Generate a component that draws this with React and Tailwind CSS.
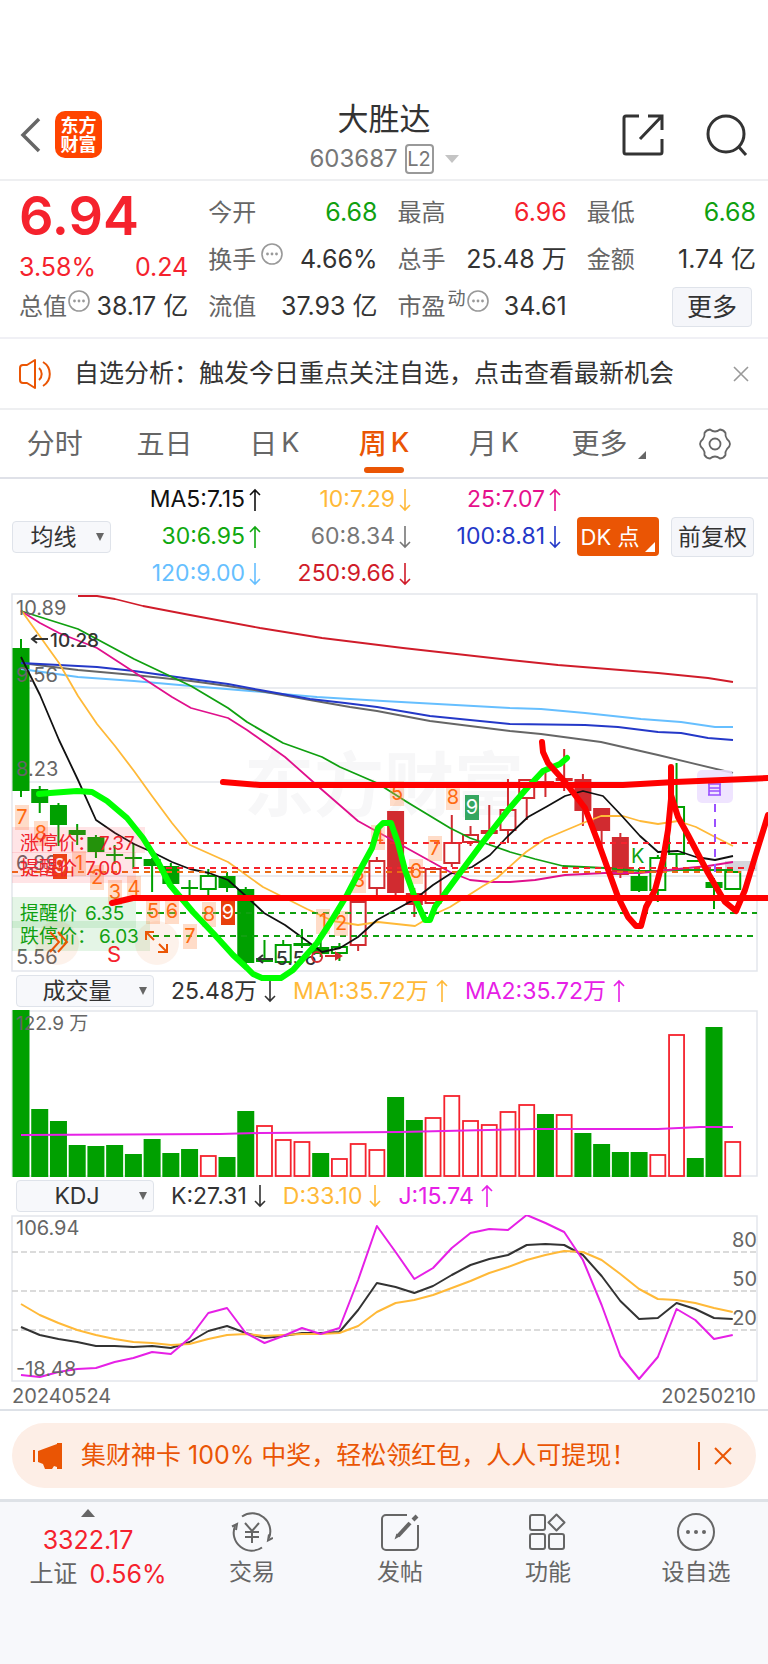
import clsx from 'clsx';

const STEP = 18.73;
const barX = (i) => 21 + i * STEP;

const TABS = [['分时'], ['五日'], ['日', 'K'], ['周', 'K'], ['月', 'K']];

const AVERAGES = [
  { label: 'MA5:7.15', up: true, color: 'text-[#111111]' },
  { label: '10:7.29', up: false, color: 'text-[#ffb938]' },
  { label: '25:7.07', up: true, color: 'text-[#e6108c]' },
  { label: '30:6.95', up: true, color: 'text-[#10a810]' },
  { label: '60:8.34', up: false, color: 'text-[#777777]' },
  { label: '100:8.81', up: false, color: 'text-[#2438c8]' },
  { label: '120:9.00', up: false, color: 'text-[#66bfff]' },
  { label: '250:9.66', up: false, color: 'text-[#d01c2a]' },
];

// [body top, body bottom, high, low, kind]
// G / R = filled green / red, g / r = hollow
const CANDLES = [
  [54, 197, 45, 203, 'G'],
  [195, 209, 192, 219, 'G'],
  [211, 231, 209, 252, 'G'],
  [236, 241, 230, 251, 'G'],
  [243, 258, 241, 264, 'G'],
  [260, 262, 251, 270, 'G'],
  [263, 265, 249, 275, 'G'],
  [265, 272, 264, 298, 'G'],
  [272, 290, 269, 291, 'G'],
  [293, 295, 286, 303, 'G'],
  [282, 295, 275, 301, 'g'],
  [282, 294, 278, 298, 'G'],
  [295, 369, 293, 373, 'G'],
  [364, 368, 346, 368, 'G'],
  [351, 368, 346, 368, 'g'],
  [349, 352, 335, 354, 'G'],
  [353, 360, 346, 363, 'G'],
  [353, 359, 349, 367, 'g'],
  [308, 351, 308, 357, 'r'],
  [267, 294, 263, 303, 'r'],
  [217, 299, 217, 303, 'R'],
  [299, 311, 294, 323, 'R'],
  [275, 309, 275, 309, 'r'],
  [249, 269, 221, 273, 'r'],
  [241, 248, 232, 252, 'r'],
  [237, 239, 211, 239, 'r'],
  [216, 236, 185, 249, 'r'],
  [186, 204, 186, 226, 'r'],
  [187, 191, 177, 203, 'R'],
  [184, 187, 155, 197, 'R'],
  [185, 217, 180, 232, 'R'],
  [214, 237, 214, 258, 'R'],
  [243, 281, 239, 284, 'R'],
  [282, 297, 274, 298, 'G'],
  [264, 296, 261, 308, 'g'],
  [213, 260, 169, 273, 'g'],
  [266, 268, 266, 268, 'G'],
  [288, 294, 284, 315, 'G'],
  [278, 295, 277, 295, 'g'],
];

const MA_LINES = [
  {
    color: '#d01c2a',
    points: '78,2 97,2 115,5 143,12 190,21 260,34 322,44 403,54 510,66 558,71 658,79 708,84 733,88',
  },
  {
    color: '#66bfff',
    points: '21,75 78,83 134,87 191,92 250,97 317,103 383,107 510,114 541,115 585,119 641,125 681,128 715,133 733,133',
  },
  {
    color: '#666666',
    points: '21,69 78,76 134,81 191,87 228,92 260,97 310,106 350,113 377,117 430,127 510,137 541,140 601,148 658,161 733,179',
  },
  {
    color: '#2438c8',
    points: '21,69 97,73 134,77 191,85 228,90 260,96 310,105 345,109 377,113 430,122 510,130 585,131 618,133 658,138 681,139 708,144 733,146',
  },
  {
    color: '#10a010',
    points: '21,17 78,35 134,65 191,92 228,114 247,128 283,149 322,163 340,173 377,189 407,208 450,234 470,244 510,258 535,265 563,272 605,274 640,277 658,277 678,276 733,276',
  },
  {
    color: '#e0108c',
    points: '21,17 40,29 59,39 97,54 134,78 152,90 172,103 191,114 228,124 247,136 285,163 320,194 358,227 403,252 450,278 470,286 490,288 510,288 535,286 565,281 605,279 640,279 678,275 708,272 733,268',
  },
  {
    color: '#ffb938',
    points: '21,16 59,69 78,102 97,130 115,152 134,177 152,202 172,229 190,251 228,268 263,293 307,315 333,327 358,331 378,328 415,332 437,319 450,313 483,292 497,284 526,258 545,245 583,229 601,222 623,222 640,227 658,230 678,227 696,233 715,243 733,252',
  },
  {
    color: '#111111',
    points: '21,63 40,101 59,146 78,186 96,226 115,239 134,250 152,258 172,268 190,275 209,279 228,286 247,303 264,319 285,331 322,358 340,354 358,343 377,326 415,305 433,291 450,280 472,273 490,261 508,242 528,223 546,213 565,202 583,197 603,202 621,221 640,242 658,258 678,257 696,263 715,266 733,262',
  },
];

const COUNTS = [
  { n: 7, x: 22, y: 223 },
  { n: 8, x: 41, y: 239 },
  { n: 9, x: 60, y: 272, fill: '#e8400c' },
  { n: 1, x: 79, y: 269 },
  { n: 2, x: 97, y: 283 },
  { n: 3, x: 115, y: 298 },
  { n: 4, x: 134, y: 294 },
  { n: 5, x: 153, y: 317 },
  { n: 6, x: 172, y: 317 },
  { n: 7, x: 190, y: 342 },
  { n: 8, x: 209, y: 320 },
  { n: 9, x: 228, y: 318, fill: '#e8400c' },
  { n: 1, x: 323, y: 327 },
  { n: 2, x: 341, y: 329 },
  { n: 3, x: 359, y: 286 },
  { n: 4, x: 378, y: 243 },
  { n: 5, x: 397, y: 199 },
  { n: 6, x: 416, y: 277 },
  { n: 7, x: 435, y: 254 },
  { n: 8, x: 453, y: 203 },
  { n: 9, x: 472, y: 213, fill: '#35a660' },
];

const PRICE_AXIS = [
  ['10.89', 21],
  ['9.56', 88],
  ['8.23', 182],
  ['6.89', 276],
  ['5.56', 370],
];

const VOLUMES = [
  167, 68, 56, 32, 31, 32, 23, 38, 24, 28, 22, 20, 66, 52, 38, 36, 24, 19, 34, 28,
  80, 57, 60, 82, 57, 53, 66, 73, 63, 63, 44, 33, 25, 25, 23, 143, 19, 150, 36,
];
const VOLUME_UP = [10, 13, 14, 15, 17, 18, 19, 22, 23, 24, 25, 26, 27, 29, 34, 35, 38];

const KDJ = {
  k: [
    112, 120, 124, 127, 131, 131, 132, 131, 133, 127, 116, 111, 118, 123, 121, 118, 118, 117, 95, 68,
    72, 78, 71, 60, 50, 44, 40, 30, 29, 30, 40, 61, 86, 104, 103, 88, 94, 103, 104,
  ],
  d: [
    89, 100, 108, 115, 120, 124, 127, 128, 130, 129, 124, 120, 119, 121, 120, 119, 119, 118, 111, 97,
    88, 85, 80, 73, 66, 58, 52, 45, 40, 36, 37, 45, 59, 74, 84, 85, 88, 93, 97,
  ],
  j: [
    160, 162, 157, 154, 153, 147, 143, 137, 139, 123, 98, 93, 118, 128, 121, 113, 119, 113, 65, 11,
    37, 64, 53, 33, 18, 14, 15, 0, 8, 17, 45, 90, 141, 164, 142, 94, 105, 124, 120,
  ],
};

const toPoints = (values) => values.map((v, i) => `${barX(i)},${v}`).join(' ');

function Arrow({ up }) {
  return (
    <svg viewBox="0 0 12 24" className="w-3 h-6 shrink-0" fill="none" stroke="currentColor" strokeWidth="1.6">
      {up ? <path d="M6 23V2M1 7l5-5 5 5" /> : <path d="M6 1v21M1 17l5 5 5-5" />}
    </svg>
  );
}

function MoreDots() {
  return (
    <svg viewBox="0 0 24 24" className="w-6 h-6 shrink-0 text-[#999999]" fill="none" stroke="currentColor" strokeWidth="1.6">
      <circle cx="12" cy="12" r="10" />
      <g fill="currentColor" stroke="none">
        <circle cx="7.5" cy="12" r="1.4" />
        <circle cx="12" cy="12" r="1.4" />
        <circle cx="16.5" cy="12" r="1.4" />
      </g>
    </svg>
  );
}

function Picker({ label, value, className }) {
  return (
    <div className={clsx('relative shrink-0', className)}>
      <select
        aria-label={label}
        defaultValue={value}
        className="block w-full h-8 appearance-none rounded border border-[#dfe3ea] bg-[#f7f8fb] pl-1 pr-5 text-[23px] leading-7 text-[#333333] text-center [text-align-last:center]"
      >
        <option>{value}</option>
      </select>
      <svg viewBox="0 0 10 10" className="absolute right-[6px] top-[11px] w-[10px] h-[10px] pointer-events-none" fill="#666666">
        <path d="M1 1h8L5 9z" />
      </svg>
    </div>
  );
}

function Header() {
  return (
    <header className="grid grid-cols-[1fr_auto_1fr] items-center px-5 pt-[90px] h-[181px] border-b-2 border-[#eeeff1]">
      <div className="flex items-center gap-[14px]">
        <button aria-label="返回">
          <svg viewBox="0 0 21 36" className="w-[21px] h-9" fill="none" stroke="#666666" strokeWidth="3.5">
            <path d="M19 2L3 18l16 16" />
          </svg>
        </button>
        <a
          href="#home"
          className="flex flex-col items-center justify-center w-[47px] h-[47px] rounded-[10px] bg-[#ff4400] text-white text-[18px] leading-[19px] font-bold"
        >
          <span>东方</span>
          <span>财富</span>
        </a>
      </div>
      <div className="flex flex-col items-center pt-1">
        <h1 className="text-[31px] leading-[42px] text-[#333333]">大胜达</h1>
        <button className="flex items-center gap-[7px] mt-[3px] h-8 text-[#777777]">
          <span className="text-[24px]">603687</span>
          <span className="flex items-center justify-center w-[29px] h-[30px] rounded border-2 border-[#999999] text-[20px]">
            L2
          </span>
          <svg viewBox="0 0 14 8" className="w-[14px] h-2 ml-1" fill="#c4c4c4">
            <path d="M0 0h14L7 8z" />
          </svg>
        </button>
      </div>
      <div className="flex items-center justify-end gap-[42px]">
        <button aria-label="分享">
          <svg viewBox="0 0 42 42" className="w-[42px] h-[42px]" fill="none" stroke="#333333" strokeWidth="3">
            <path d="M17 2H4a2 2 0 00-2 2v34a2 2 0 002 2h34a2 2 0 002-2V25" />
            <path d="M26 2h14v14M40 2L18 25" />
          </svg>
        </button>
        <button aria-label="搜索">
          <svg viewBox="0 0 42 42" className="w-[42px] h-[42px]" fill="none" stroke="#333333" strokeWidth="3">
            <circle cx="20" cy="20" r="18" />
            <path d="M32 32l8 9" />
          </svg>
        </button>
      </div>
    </header>
  );
}

function Stat({ label, value, tone = 'text-[#333333]', children }) {
  return (
    <div className="flex items-center h-[47px] whitespace-nowrap">
      <span className="text-[24px] text-[#666666]">{label}</span>
      {children}
      <span className={clsx('ml-auto', tone)}>{value}</span>
    </div>
  );
}

function Quote() {
  return (
    <section className="grid grid-cols-4 gap-x-5 pl-[19px] pr-3 pt-2 h-[158px] border-b-2 border-[#f0f0f5] text-[25px]">
      <div className="flex flex-col text-[#f5222d]">
        <strong className="flex items-center h-[54px] text-[54px] leading-none font-semibold">6.94</strong>
        <div className="flex items-end justify-between h-10 leading-8">
          <span>3.58%</span>
          <span>0.24</span>
        </div>
        <Stat label="总值" value="38.17 亿">
          <span className="-mt-3"><MoreDots /></span>
        </Stat>
      </div>
      <div>
        <Stat label="今开" value="6.68" tone="text-[#10a010]" />
        <Stat label="换手" value="4.66%">
          <span className="ml-1 -mt-3"><MoreDots /></span>
        </Stat>
        <Stat label="流值" value="37.93 亿" />
      </div>
      <div>
        <Stat label="最高" value="6.96" tone="text-[#f5222d]" />
        <Stat label="总手" value="25.48 万" />
        <Stat label="市盈" value="34.61">
          <span className="ml-[2px] -mt-4 text-[18px] text-[#666666]">动</span>
          <span className="-mt-3"><MoreDots /></span>
        </Stat>
      </div>
      <div>
        <Stat label="最低" value="6.68" tone="text-[#10a010]" />
        <Stat label="金额" value="1.74 亿" />
        <div className="flex items-center justify-end h-[47px] pr-1">
          <button className="w-20 h-10 rounded border border-[#dfe3ea] bg-[#f5f6fa] text-[25px] leading-9 text-[#333333]">
            更多
          </button>
        </div>
      </div>
    </section>
  );
}

function Notice() {
  return (
    <section className="flex items-center h-[71px] pl-[19px] pr-[18px] border-b-2 border-[#eeeff1]">
      <svg viewBox="0 0 34 30" className="w-[34px] h-[30px] shrink-0" fill="none" stroke="#ea5504" strokeWidth="2">
        <path d="M8 6H4a3 3 0 00-3 3v12a3 3 0 003 3h4l8 5V1z" strokeLinejoin="round" />
        <path d="M16 1v28M20 9a8 8 0 010 12M24 3a14 14 0 010 24" />
      </svg>
      <p className="ml-[21px] text-[25px] text-[#333333] whitespace-nowrap">
        自选分析：触发今日重点关注自选，点击查看最新机会
      </p>
      <button aria-label="关闭提示" className="ml-auto">
        <svg viewBox="0 0 18 18" className="w-[18px] h-[18px]" stroke="#999999" strokeWidth="1.6">
          <path d="M2 2l14 14M16 2L2 16" />
        </svg>
      </button>
    </section>
  );
}

function Tabs() {
  return (
    <nav className="grid grid-cols-7 h-[69px] border-b-2 border-[#dfe1e8] text-[28px] text-[#666666]">
      {TABS.map(([name, unit]) => {
        const active = name === '周';
        return (
          <button
            key={name}
            className={clsx('relative flex items-center justify-center gap-1', active && 'text-[#ea5504] font-medium')}
          >
            <span>{name}</span>
            {unit && <span className="text-[27px]">{unit}</span>}
            {active && <span className="absolute bottom-1 w-10 h-[6px] rounded-full bg-[#ea5504]" />}
          </button>
        );
      })}
      <button className="relative flex items-center justify-center pr-2">
        更多
        <svg viewBox="0 0 8 8" className="absolute right-3 bottom-[18px] w-2 h-2" fill="#666666">
          <path d="M8 0v8H0z" />
        </svg>
      </button>
      <button aria-label="设置" className="flex items-center justify-center pl-1">
        <svg viewBox="0 0 32 32" className="w-8 h-8" fill="none" stroke="#666666" strokeWidth="1.8" strokeLinejoin="round">
          <path d="M11 1.500Q13.500 3.500 16 3.500T21 1.500Q25 2 26.500 5Q26 8.500 28 11Q31 13.500 31 16Q31 18.500 28 21Q26 23.500 26.500 27Q25 30 21 30.500Q18.500 28.500 16 28.500T11 30.500Q7 30 5.500 27Q6 23.500 4 21Q1 18.500 1 16Q1 13.500 4 11Q6 8.500 5.500 5Q7 2 11 1.500Z" />
          <circle cx="16" cy="16" r="5.5" />
        </svg>
      </button>
    </nav>
  );
}

function Averages() {
  return (
    <div className="flex items-center h-[115px] pl-3 pr-[14px]">
      <Picker label="主图指标" value="均线" className="w-[99px]" />
      <div className="grid grid-cols-3 flex-1">
        {AVERAGES.map((ma) => (
          <span
            key={ma.label}
            className={clsx('flex items-center justify-end gap-1 h-[37px] text-[23px] whitespace-nowrap', ma.color)}
          >
            {ma.label}
            <Arrow up={ma.up} />
          </span>
        ))}
      </div>
      <button className="relative ml-4 w-[82px] h-[39px] pr-4 rounded bg-[#ea5504] text-[22px] leading-9 text-white whitespace-nowrap">
        DK 点
        <svg viewBox="0 0 10 10" className="absolute right-1 bottom-1 w-[10px] h-[10px]" fill="#ffffff">
          <path d="M10 0v10H0z" />
        </svg>
      </button>
      <button className="ml-3 w-[83px] h-10 rounded border border-[#dfe3ea] bg-[#f5f6fa] text-[23px] leading-9 text-[#333333]">
        前复权
      </button>
    </div>
  );
}

function Candle({ index, data }) {
  const [top, bottom, high, low, kind] = data;
  const x = barX(index);
  const color = kind.toLowerCase() === 'g' ? '#00a000' : '#d12b30';
  const hollow = kind === kind.toLowerCase();

  return (
    <g stroke={color} strokeWidth="2">
      <path d={`M${x} ${high}V${top}M${x} ${bottom}V${low}`} />
      {hollow ? (
        <rect x={x - 7.5} y={top} width="15" height={bottom - top} fill="none" />
      ) : (
        <rect x={x - 8.5} y={top} width="17" height={bottom - top} fill={color} stroke="none" />
      )}
    </g>
  );
}

function PriceChart() {
  return (
    <svg viewBox="0 0 768 378" className="relative z-10 block w-full overflow-visible pointer-events-none text-[20px]">
      <text x="244" y="217" fill="#f7f7f8" className="text-[70px] font-bold">东方财富</text>
      <g fill="none" stroke="#e3e6ec" strokeWidth="1.5">
        <rect x="12" y="0" width="745" height="377" />
        <path d="M12 94H757M12 188H757M12 282H757" />
      </g>
      <rect x="725" y="267" width="32" height="10" fill="#d6d6dc" />

      {CANDLES.map((c, i) => (
        <Candle key={i} index={i} data={c} />
      ))}

      <g fill="none" strokeWidth="1.8" strokeLinejoin="round">
        {MA_LINES.map((line) => (
          <polyline key={line.color} points={line.points} stroke={line.color} />
        ))}
      </g>

      <g strokeWidth="2" strokeDasharray="6 5">
        <path d="M148 249H757M133 274H757" stroke="#f5222d" />
        <path d="M12 278H741" stroke="#ea6a14" />
        <path d="M136 319H757M153 342H757" stroke="#10a010" />
      </g>

      <g fill="#666666">
        {PRICE_AXIS.map(([label, y]) => (
          <text key={label} x="16" y={y}>{label}</text>
        ))}
      </g>

      {COUNTS.map((c) => (
        <g key={`${c.n}-${c.x}`}>
          <rect x={c.x - 7} y={c.y - 12} width="14" height="25" fill={c.fill || '#ff9a60'} fillOpacity={c.fill ? 1 : 0.35} />
          <text x={c.x} y={c.y + 7} textAnchor="middle" fill={c.fill ? '#ffffff' : '#ff6a10'}>
            {c.n}
          </text>
        </g>
      ))}

      {/* 涨跌停与提醒价 */}
      <g fill="#ff4050" fillOpacity="0.14">
        <rect x="12" y="233" width="133" height="26" />
        <rect x="12" y="258" width="124" height="31" />
      </g>
      <g fill="#20b030" fillOpacity="0.12">
        <rect x="12" y="303" width="124" height="31" />
        <rect x="12" y="327" width="138" height="30" />
      </g>
      <g fill="#ea5504" fillOpacity="0.08">
        <circle cx="57" cy="349" r="22" />
        <circle cx="157" cy="349" r="22" />
      </g>
      <g fill="#f0222d" className="text-[19px]">
        <text x="20" y="256">涨停价：</text>
        <text x="99" y="256">7.37</text>
        <text x="20" y="281">提醒价</text>
        <text x="85" y="281">7.00</text>
      </g>
      <g fill="#10a010" className="text-[19px]">
        <text x="20" y="326">提醒价</text>
        <text x="85" y="326">6.35</text>
        <text x="20" y="349">跌停价：</text>
        <text x="99" y="349">6.03</text>
      </g>
      <g fill="none" stroke="#ea5504" strokeWidth="2">
        <path d="M50 338l9 10-9 10M58 338l9 10-9 10" />
        <path d="M154 338h-8v8M146 338l8 8M158 358h9v-8M167 358l-8-8" />
      </g>

      <g fill="#333333" className="text-[19px] font-medium">
        <text x="50" y="53">10.28</text>
        <text x="276" y="371">5.56</text>
      </g>
      <g fill="none" stroke="#333333" strokeWidth="2">
        <path d="M48 45H33M37 41l-5 4 5 4" />
        <path d="M273 365H258M263 361l-5 4 5 4" />
      </g>

      <text x="107" y="368" fill="#f5222d" className="text-[22px]">S</text>
      <text x="631" y="269" fill="#10a010">K</text>
      <g fill="none" stroke="#d12b30" strokeWidth="2">
        <circle cx="317" cy="363" r="5" />
        <path d="M325 362H339" />
        <path d="M336 359l5 3-5 3z" fill="#d12b30" />
      </g>

      <rect x="697" y="176" width="36" height="33" rx="5" fill="#ecdfff" fillOpacity="0.85" />
      <g fill="none" stroke="#9a50ff" strokeWidth="1.6">
        <path d="M708 190h13M709 190v11M720 190v11M709 194h11M709 197h11M708 201h13" />
        <path d="M715 210V284" strokeWidth="2" strokeDasharray="8 7" />
      </g>

      {/* 手绘趋势线 */}
      <g fill="none" strokeLinecap="round" strokeLinejoin="round">
        <polyline
          stroke="#00ff00"
          strokeWidth="6"
          points="39,200 50,199 77,197 92,198 107,207 127,224 143,244 158,268 170,291 193,318 213,339 233,361 247,374 253,380 262,384 281,384 293,376 317,349 330,329 347,301 360,276 372,254 378,234 383,229 391,229 398,249 405,276 415,304 425,326 430,326 435,313 457,283 483,248 508,216 528,193 543,177 560,170 567,164"
        />
        <g stroke="#ff0000" strokeWidth="6">
          <polyline points="223,188 260,191 623,191 675,188 768,184" />
          <polyline points="112,309 133,304 768,304" />
          <polyline points="542,148 543,158 548,169 565,188 585,214 601,256 618,303 628,323 636,332 641,332 646,313 655,296 663,266 668,236 671,205 671,173" />
          <polyline points="671,201 678,223 688,241 708,279 725,308 736,317 745,296 755,263 768,221" />
        </g>
      </g>
    </svg>
  );
}

function VolumeChart() {
  return (
    <svg viewBox="0 0 768 167" className="block w-full text-[20px]">
      <rect x="12" y="1" width="745" height="165" fill="none" stroke="#e3e6ec" strokeWidth="1.5" />
      {VOLUMES.map((h, i) =>
        VOLUME_UP.includes(i) ? (
          <rect key={i} x={barX(i) - 7.5} y={168 - h} width="15" height={h - 2} fill="none" stroke="#f5222d" strokeWidth="1.8" />
        ) : (
          <rect key={i} x={barX(i) - 8.5} y={167 - h} width="17" height={h} fill="#00a000" />
        )
      )}
      <polyline
        fill="none"
        stroke="#e620e6"
        strokeWidth="2"
        points="21,125 220,124 260,123 400,122 535,119 658,119 700,117 733,117"
      />
      <text x="16" y="20" fill="#666666" className="text-[19px]">122.9 万</text>
    </svg>
  );
}

function KdjChart() {
  return (
    <svg viewBox="0 0 768 167" className="block w-full text-[20px]">
      <rect x="12" y="1" width="745" height="165" fill="none" stroke="#e3e6ec" strokeWidth="1.5" />
      <path d="M12 37H757M12 76H757M12 115H757" stroke="#cfcfcf" strokeWidth="1.6" strokeDasharray="6 3" />
      <g fill="none" strokeWidth="2" strokeLinejoin="round">
        <polyline points={toPoints(KDJ.k)} stroke="#333333" />
        <polyline points={toPoints(KDJ.d)} stroke="#ffb938" />
        <polyline points={toPoints(KDJ.j)} stroke="#e620e6" />
      </g>
      <g fill="#666666">
        <text x="16" y="20">106.94</text>
        <text x="16" y="161">-18.48</text>
        <g textAnchor="end">
          <text x="757" y="32">80</text>
          <text x="757" y="71">50</text>
          <text x="757" y="110">20</text>
        </g>
      </g>
    </svg>
  );
}

function Reading({ children, up, tone }) {
  return (
    <span className={clsx('flex items-center gap-[7px] whitespace-nowrap', tone)}>
      {children}
      <Arrow up={up} />
    </span>
  );
}

function Promo() {
  return (
    <aside className="mx-3 mt-3 mb-[11px] flex items-center h-[65px] pl-5 pr-6 rounded-full bg-[#fdeee6] text-[#ea5504]">
      <svg viewBox="0 0 32 28" className="w-8 h-7 shrink-0" fill="currentColor">
        <path d="M1 8h2v12H1zM6 9l19-7V1h5v26h-5v-2l-3-1-2 3h-7l-2-5-5-2z" />
      </svg>
      <p className="ml-[17px] text-[25px] whitespace-nowrap">集财神卡 100% 中奖，轻松领红包，人人可提现！</p>
      <span className="ml-auto w-[2px] h-7 bg-[#ea5504]" />
      <button aria-label="关闭活动" className="ml-[14px]">
        <svg viewBox="0 0 18 18" className="w-[18px] h-[18px]" stroke="currentColor" strokeWidth="2">
          <path d="M1 1l16 16M17 1L1 17" />
        </svg>
      </button>
    </aside>
  );
}

function NavItem({ label, children }) {
  return (
    <a href={`#${label}`} className="flex flex-col items-center gap-1 pt-[10px] pl-1">
      <svg viewBox="0 0 42 40" className="w-[42px] h-10" fill="none" stroke="currentColor" strokeWidth="2">
        {children}
      </svg>
      <span className="text-[23px] leading-8">{label}</span>
    </a>
  );
}

function BottomNav() {
  return (
    <nav className="flex-1 grid grid-cols-[176px_repeat(4,1fr)] items-start border-t-[3px] border-[#dee2e7] bg-[#f7f8fb] text-[#666666]">
      <a href="#index" className="flex flex-col items-center pt-[7px] text-[25px] leading-[34px] text-[#f5222d]">
        <svg viewBox="0 0 14 8" className="w-[14px] h-2 mb-[6px]" fill="#666666">
          <path d="M7 0l7 8H0z" />
        </svg>
        <span>3322.17</span>
        <span className="flex items-center gap-3 pl-5 whitespace-nowrap">
          <span className="text-[24px] text-[#666666]">上证</span>
          <span>0.56%</span>
        </span>
      </a>
      <NavItem label="交易">
        <path d="M11 4.500A18 18 0 0138 26M31 35.500A18 18 0 014 14" />
        <path d="M1 14.500l5-2.500-1 6M42 26l-5 2.500 1-6" />
        <path d="M14 11l7 8 7-8M21 19v12M14 20h14M14 25h14" />
      </NavItem>
      <NavItem label="发帖">
        <path d="M28 3H7a4 4 0 00-4 4v27a4 4 0 004 4h28a4 4 0 004-4V13" />
        <path d="M19 24L31 11" strokeWidth="4" />
        <path d="M15.500 27.500l2-6 3 3z" fill="currentColor" stroke="none" />
        <path d="M34 8L38 4" strokeWidth="4" />
      </NavItem>
      <NavItem label="功能">
        <rect x="3" y="3" width="15" height="15" rx="2" />
        <rect x="3" y="22" width="15" height="15" rx="2" />
        <rect x="22" y="22" width="15" height="15" rx="2" />
        <path d="M29.500 2.500l8 8-8 8-8-8z" strokeLinejoin="round" />
      </NavItem>
      <NavItem label="设自选">
        <circle cx="21" cy="20" r="18" />
        <g fill="currentColor" stroke="none">
          <circle cx="13" cy="20" r="2" />
          <circle cx="21" cy="20" r="2" />
          <circle cx="29" cy="20" r="2" />
        </g>
      </NavItem>
    </nav>
  );
}

export default function App() {
  return (
    <div className="min-h-screen flex flex-col bg-white font-[Inter,'Noto_Sans_CJK_SC',sans-serif]">
      <Header />
      <Quote />
      <Notice />
      <Tabs />
      <main>
        <Averages />
        <PriceChart />
        <div className="flex items-center gap-[17px] h-[38px] pl-4 text-[23px]">
          <Picker label="副图一" value="成交量" className="w-[138px]" />
          <Reading tone="text-[#333333]">25.48万</Reading>
          <Reading up tone="text-[#ffb938]">MA1:35.72万</Reading>
          <Reading up tone="text-[#e620e6]">MA2:35.72万</Reading>
        </div>
        <VolumeChart />
        <div className="flex items-center gap-[17px] h-[38px] pl-4 text-[23px]">
          <Picker label="副图二" value="KDJ" className="w-[138px]" />
          <Reading tone="text-[#333333]">K:27.31</Reading>
          <Reading tone="text-[#ffb938]">D:33.10</Reading>
          <Reading up tone="text-[#e620e6]">J:15.74</Reading>
        </div>
        <KdjChart />
        <div className="flex justify-between h-[29px] px-3 border-b-2 border-[#dde1e7] text-[20px] leading-7 text-[#666666]">
          <span>20240524</span>
          <span>20250210</span>
        </div>
      </main>
      <Promo />
      <BottomNav />
    </div>
  );
}
